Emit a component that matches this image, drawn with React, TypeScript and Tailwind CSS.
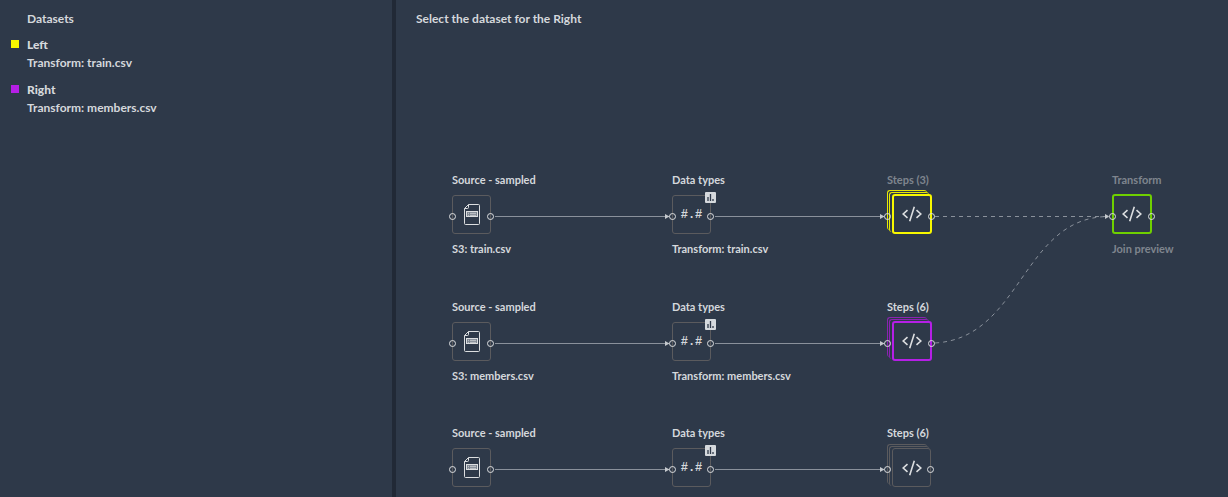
import type { ReactNode } from "react";

type Tone = "plain" | "yellow" | "purple" | "green";

const boxTone: Record<Tone, string> = {
  plain: "border border-[#5b5b5e]",
  yellow: "border-2 border-[#f8f800]",
  purple: "border-2 border-[#b51fe6]",
  green: "border-2 border-[#6fd000]",
};

const sheetTone: Record<Tone, string> = {
  plain: "border-[#5b5b5e]",
  yellow: "border-[#e6e806]",
  purple: "border-[#8a24b0]",
  green: "border-[#6fd000]",
};

function FileIcon() {
  return (
    <svg width="19" height="21" viewBox="0 0 19 21" fill="none" stroke="#dcdee0" aria-hidden="true">
      <path d="M6.5 .5H16.5Q17.5 .5 17.5 1.5V19.5Q17.5 20.5 16.5 20.5H3.5Q2.5 20.5 2.5 19.5V4.5Z" />
      <path d="M6.5 .5V3.5Q6.5 4.5 5.5 4.5H2.5" />
      <rect x="4.5" y="7.5" width="11" height="5" fill="#7d8590" />
      <path d="M8 9.3H14M8 11.3H14M6 9.3H7M6 11.3H7" strokeWidth=".8" />
    </svg>
  );
}

function CodeIcon() {
  return (
    <svg width="20" height="16" viewBox="0 0 20 16" fill="none" stroke="#dcdee0" strokeWidth="1.6" aria-hidden="true">
      <path d="M5.5 4.2L1.2 8L5.5 11.8M14.5 4.2L18.8 8L14.5 11.8M12.3 .8L7.7 15.2" />
    </svg>
  );
}

function ChartBadge() {
  return (
    <svg className="absolute -top-[3px] -right-[5px]" width="11" height="11" viewBox="0 0 11 11" aria-hidden="true">
      <rect width="11" height="11" rx="1" fill="#d5d9dd" />
      <path d="M3 5V9M5.5 2V9M8 7V9" stroke="#2e3949" strokeWidth="1.3" />
    </svg>
  );
}

function Port({ className }: { className: string }) {
  return <span className={`absolute size-[7px] rounded-full border border-[#dcdee0] ${className}`} />;
}

type NodeProps = {
  place: string;
  title: string;
  caption?: string;
  tone?: Tone;
  muted?: boolean;
  stacked?: boolean;
  badge?: boolean;
  children: ReactNode;
};

function FlowNode({ place, title, caption, tone = "plain", muted, stacked, badge, children }: NodeProps) {
  const lit = tone !== "plain";
  return (
    <li className={`absolute flex flex-col gap-[7px] text-[11px] leading-4 font-bold whitespace-nowrap ${muted ? "text-[#7f858e]" : "text-[#d5d8dc]"} ${place}`}>
      <span>{title}</span>
      <div className={`relative ${lit ? "-mt-px size-10" : "size-[39px]"} ${stacked ? "ml-[5px]" : ""}`}>
        {stacked && (
          <>
            <span className={`absolute -top-1 -left-[5px] size-10 rounded-[3px] border-t border-l ${sheetTone[tone]}`} />
            <span className={`absolute -top-0.5 -left-[3px] size-10 rounded-[3px] border-t border-l ${sheetTone[tone]}`} />
          </>
        )}
        <div className={`relative flex size-full items-center justify-center rounded-[3px] bg-[#2e3949] ${boxTone[tone]}`}>{children}</div>
        {badge && <ChartBadge />}
        <Port className={`${lit ? "top-[19px]" : "top-[18px]"} ${stacked ? "-left-2" : "-left-[3px]"}`} />
        <Port className={`${lit ? "top-[19px]" : "top-[18px]"} -right-[3px]`} />
      </div>
      {caption && <span>{caption}</span>}
    </li>
  );
}

const typeMark = <span className="font-['Liberation_Mono',monospace] text-[12px] font-bold">#.#</span>;

function Edges() {
  return (
    <svg className="absolute top-0 left-0" width="832" height="497" fill="none" stroke="#8a919b" aria-hidden="true">
      <defs>
        <marker id="tip" markerUnits="userSpaceOnUse" markerWidth="5" markerHeight="6" refX="4" refY="3" orient="auto">
          <path d="M0 .5L4.5 3L0 5.5Z" fill="#c5c9ce" stroke="none" />
        </marker>
      </defs>
      {[216.5, 343.5, 469.5].map((y) => (
        <g key={y}>
          <path d={`M99 ${y}H273`} markerEnd="url(#tip)" />
          <path d={`M319 ${y}H488`} markerEnd="url(#tip)" />
        </g>
      ))}
      <path d="M539 216.5H713" strokeDasharray="4 4" markerEnd="url(#tip)" />
      <path d="M539 343C626 338 626 216.5 713 216.5" strokeDasharray="4 4" />
    </svg>
  );
}

function Dataset({ color, name, source }: { color: string; name: string; source: string }) {
  return (
    <li className="flex gap-2">
      <span className={`mt-1 size-2 shrink-0 ${color}`} />
      <div className="leading-[18px]">
        <p className="font-black">{name}</p>
        <p>{source}</p>
      </div>
    </li>
  );
}

export default function App() {
  return (
    <div className="flex h-screen overflow-hidden bg-[#2e3949] font-['Lato',sans-serif] text-[12px] font-bold text-[#d5d8dc]">
      <aside className="w-98 shrink-0 px-[11px] pt-[10px]">
        <h2 className="pl-4 leading-[18px]">Datasets</h2>
        <ul className="mt-2 flex flex-col gap-[9px]">
          <Dataset color="bg-[#f8f800]" name="Left" source="Transform: train.csv" />
          <Dataset color="bg-[#b51fe6]" name="Right" source="Transform: members.csv" />
        </ul>
      </aside>
      <main className="relative min-w-0 flex-1 overflow-hidden border-l-4 border-[#212936]">
        <h1 className="px-5 pt-[10px] leading-[18px]">Select the dataset for the Right</h1>
        <Edges />
        <ul>
          <FlowNode place="left-14 top-[172px]" title="Source - sampled" caption="S3: train.csv"><FileIcon /></FlowNode>
          <FlowNode place="left-69 top-[172px]" title="Data types" caption="Transform: train.csv" badge>{typeMark}</FlowNode>
          <FlowNode place="left-[491px] top-[172px]" title="Steps (3)" tone="yellow" muted stacked><CodeIcon /></FlowNode>
          <FlowNode place="left-[716px] top-[172px]" title="Transform" caption="Join preview" tone="green" muted><CodeIcon /></FlowNode>

          <FlowNode place="left-14 top-[299px]" title="Source - sampled" caption="S3: members.csv"><FileIcon /></FlowNode>
          <FlowNode place="left-69 top-[299px]" title="Data types" caption="Transform: members.csv" badge>{typeMark}</FlowNode>
          <FlowNode place="left-[491px] top-[299px]" title="Steps (6)" tone="purple" stacked><CodeIcon /></FlowNode>

          <FlowNode place="left-14 top-[425px]" title="Source - sampled"><FileIcon /></FlowNode>
          <FlowNode place="left-69 top-[425px]" title="Data types" badge>{typeMark}</FlowNode>
          <FlowNode place="left-[491px] top-[425px]" title="Steps (6)" stacked><CodeIcon /></FlowNode>
        </ul>
      </main>
    </div>
  );
}
